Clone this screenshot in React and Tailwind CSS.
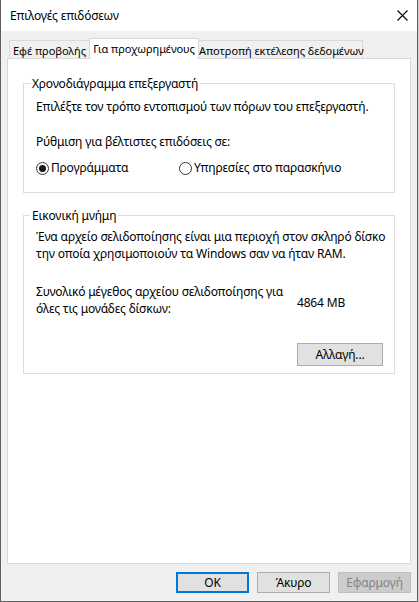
const font = { fontFamily: '"Noto Sans", "Liberation Sans", sans-serif' };

const Radio = ({ checked, label, className = '' }) => (
  <label className={`flex items-center gap-[2px] ${className}`}>
    <span className="flex h-[13px] w-[13px] shrink-0 items-center justify-center rounded-full border border-[#333333] bg-white">
      {checked && <span className="h-[7px] w-[7px] rounded-full bg-[#1a1a1a]" />}
    </span>
    <span className="whitespace-nowrap">{label}</span>
  </label>
);

const GroupBox = ({ title, children, className = '' }) => (
  <div className={`mx-[15px] border border-[#dcdcdc] ${className}`}>
    <div className="-mt-[8px] ml-[6px] w-fit bg-white px-[2px] leading-[16px] whitespace-nowrap">{title}</div>
    {children}
  </div>
);

const Button = ({ children, primary, disabled, className = '' }) => (
  <button
    disabled={disabled}
    className={`flex items-center justify-center leading-none whitespace-nowrap ${
      primary
        ? 'border-2 border-[#0078d7] bg-[#e1e1e1] text-black'
        : disabled
        ? 'border border-[#bfbfbf] bg-[#cccccc] text-[#838383]'
        : 'border border-[#adadad] bg-[#e1e1e1] text-black'
    } ${className}`}
  >
    {children}
  </button>
);

export default function App() {
  return (
    <div className="h-[602px] w-[419px] bg-[#cfcfcf] text-[12px] tracking-[-0.18px] text-black" style={font}>
      <div className="flex h-[602px] w-[418px] flex-col border-x border-b border-[#5f5f5f] bg-[#f0f0f0]">
        {/* title bar */}
        <div className="flex h-[31px] shrink-0 items-center bg-white pl-[9px]">
          <span className="flex-1 text-[12px]">Επιλογές επιδόσεων</span>
          <div className="flex h-[31px] w-[30px] shrink-0 items-center justify-center">
            <svg width="11" height="11" viewBox="0 0 11 11">
              <path d="M0.5 0.5 L10.5 10.5 M10.5 0.5 L0.5 10.5" stroke="#000000" strokeWidth="1.1" fill="none" />
            </svg>
          </div>
        </div>

        <div className="flex flex-col pl-[6px] pt-[7px]">
          {/* tabs */}
          <div className="flex h-[21px] items-end whitespace-nowrap pl-[2px] text-[11px] tracking-[-0.05px]">
            <div className="mb-[1px] w-[80px] border-l border-t border-[#d9d9d9] bg-[#f0f0f0] pt-[2px] text-center leading-[15px]">
              Εφέ προβολής
            </div>
            <div className="relative z-10 w-[110px] border-x border-t border-[#d9d9d9] bg-white pb-[2px] pt-[2px] text-center leading-[16px]">
              Για προχωρημένους
            </div>
            <div className="mb-[1px] w-[164px] border-r border-t border-[#d9d9d9] bg-[#f0f0f0] pt-[2px] text-center leading-[15px]">
              Αποτροπή εκτέλεσης δεδομένων
            </div>
          </div>

          {/* panel */}
          <div className="-mt-[1px] flex h-[506px] w-[404px] flex-col border border-[#d9d9d9] bg-white pt-[24px]">
            <GroupBox title="Χρονοδιάγραμμα επεξεργαστή" className="pb-[16px]">
              <p className="mt-[7px] pl-[12px] leading-[16px] whitespace-nowrap">
                Επιλέξτε τον τρόπο εντοπισμού των πόρων του επεξεργαστή.
              </p>
              <p className="mt-[19px] pl-[12px] leading-[16px]">Ρύθμιση για βέλτιστες επιδόσεις σε:</p>
              <div className="mt-[10px] flex pl-[12px] leading-[16px]">
                <Radio checked label="Προγράμματα" className="w-[143px]" />
                <Radio label="Υπηρεσίες στο παρασκήνιο" />
              </div>
            </GroupBox>

            <GroupBox title="Εικονική μνήμη" className="mt-[22px] pb-[7px]">
              <p className="mt-[4px] pl-[12px] leading-[17px] whitespace-nowrap">
                Ένα αρχείο σελιδοποίησης είναι μια περιοχή στον σκληρό δίσκο
                <br />
                την οποία χρησιμοποιούν τα Windows σαν να ήταν RAM.
              </p>
              <div className="mt-[21px] flex items-start pl-[12px]">
                <p className="w-[261px] leading-[17px] whitespace-nowrap">
                  Συνολικό μέγεθος αρχείου σελιδοποίησης για
                  <br />
                  όλες τις μονάδες δίσκων:
                </p>
                <span className="mt-[12px] leading-[16px]">4864 MB</span>
              </div>
              <div className="mt-[26px] flex justify-end pr-[11px]">
                <Button className="h-[23px] w-[86px]">Αλλαγή...</Button>
              </div>
            </GroupBox>
          </div>

          {/* dialog buttons */}
          <div className="mt-[8px] flex gap-[8px] pl-[169px]">
            <Button primary className="h-[21px] w-[73px]">OK</Button>
            <Button className="h-[21px] w-[73px]">Άκυρο</Button>
            <Button disabled className="h-[21px] w-[73px]">Εφαρμογή</Button>
          </div>
        </div>
      </div>
    </div>
  );
}
